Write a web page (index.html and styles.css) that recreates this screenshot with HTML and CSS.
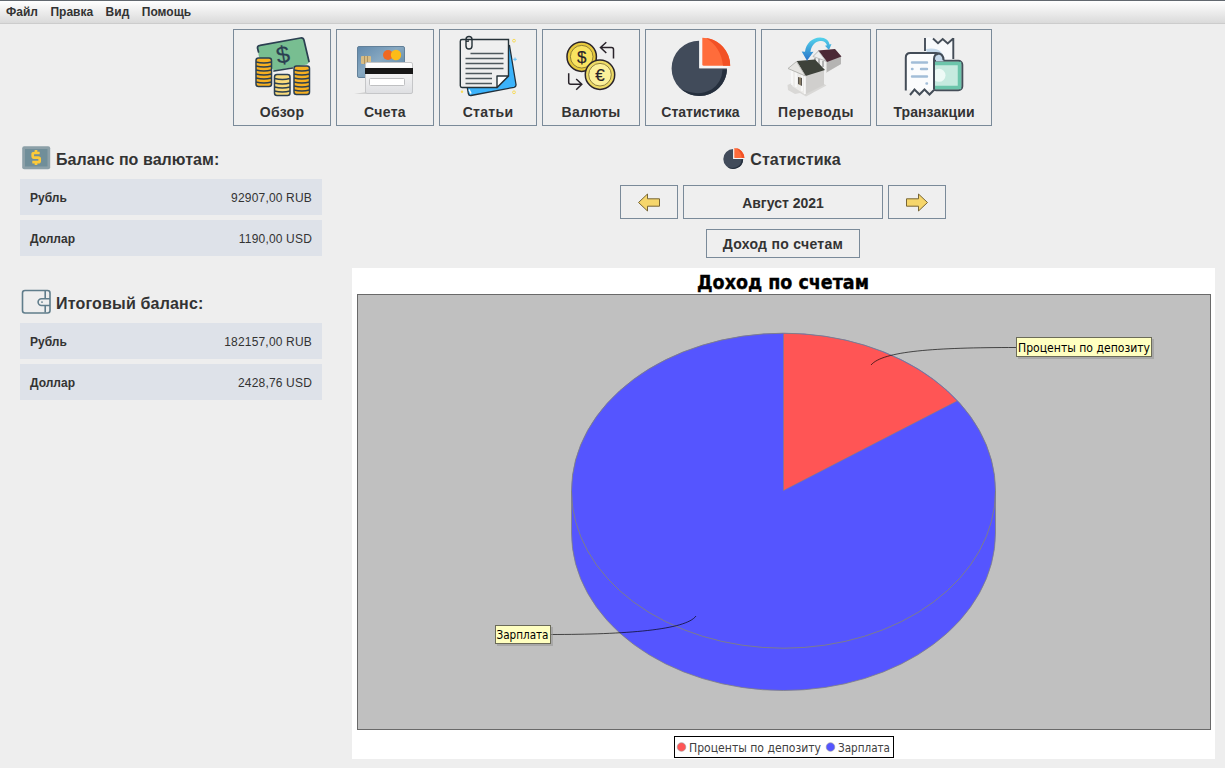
FILE: index.html
```html
<!DOCTYPE html>
<html lang="ru">
<head>
<meta charset="utf-8">
<title>Статистика</title>
<link rel="stylesheet" href="styles.css">
</head>
<body>
<nav class="menubar"><span>Файл</span><span>Правка</span><span>Вид</span><span>Помощь</span></nav>

<header class="toolbar">
  <button class="tool w98">
    <svg viewBox="0 0 64 64">
      <path d="M9 22 7.3 12.5 10 10.3 51 2.9 54 5 59.3 27 57 29.5 24.5 35.8z" fill="#78be91"/>
      <path d="M8.500 17 7.500 13Q7.300 10.700 10 10.300L50.500 3Q53.400 2.500 54 5.200L59 26.500M24 36l18.500-3" fill="none" stroke="#2b3f51" stroke-width="1.700" stroke-linecap="round"/>
      <text x="33" y="28" class="glyph dollar-big" transform="rotate(-10 33 20)">$</text>
      <g stroke="#2b3f51" stroke-width="1.500">
        <rect x="6" y="23" width="15.500" height="28.500" rx="2.500" fill="#f7b021"/>
        <path d="M6 27q8 2 15.500 0M6 31q8 2 15.500 0M6 35q8 2 15.500 0M6 39q8 2 15.500 0M6 43q8 2 15.500 0M6 47q8 2 15.500 0" fill="none"/>
        <rect x="24.500" y="39.500" width="15.500" height="21" rx="2.500" fill="#f8da7b"/>
        <path d="M24.500 43.500q8 2 15.500 0M24.500 48q8 2 15.500 0M24.500 52q8 2 15.500 0M24.500 56q8 2 15.500 0" fill="none"/>
        <rect x="44" y="31" width="15.500" height="28.500" rx="2.500" fill="#f7b021"/>
        <path d="M44 35q8 2 15.500 0M44 39q8 2 15.500 0M44 43q8 2 15.500 0M44 47q8 2 15.500 0M44 51q8 2 15.500 0M44 55q8 2 15.500 0" fill="none"/>
      </g>
    </svg>
    <span>Обзор</span>
  </button>
  <button class="tool w98">
    <svg viewBox="0 0 64 64">
      <defs>
        <linearGradient id="card" x2="1" y2="1"><stop offset="0" stop-color="#6189ac"/><stop offset=".45" stop-color="#88a9c2"/><stop offset="1" stop-color="#527f9e"/></linearGradient>
        <linearGradient id="paper" x2="0" y2="1"><stop offset="0" stop-color="#fff"/><stop offset="1" stop-color="#dedfe2"/></linearGradient>
      </defs>
      <path d="M1 59h12v-2z" fill="#d2d2d2"/>
      <rect x="4.500" y="11.500" width="47" height="31" rx="1.500" fill="url(#card)" stroke="#628099"/>
      <rect x="8" y="21" width="10" height="8" rx="1" fill="#d8bd85"/><path d="M11.500 21v8M14.500 21v8" stroke="#9b8052" stroke-width=".7"/>
      <circle cx="35" cy="20" r="5" fill="#ef6924"/><circle cx="43" cy="20" r="5.200" fill="#fdbc18"/>
      <rect x="12.500" y="27.500" width="47" height="31" rx="1.500" fill="url(#paper)" stroke="#c5c6c8"/>
      <path d="M12 33h48v6H12z" fill="#171717"/>
      <rect x="16.500" y="43.500" width="35" height="7" rx="1" fill="#fff" stroke="#bfc0c2"/>
    </svg>
    <span>Счета</span>
  </button>
  <button class="tool w98">
    <svg viewBox="0 0 64 64">
      <path d="M51 11 53.500 10.500 60 49.500Q60.300 51.800 58 52.300L15 60.500Q12.800 60.800 12.300 58.500L11 51z" fill="#3bb3fb" stroke="#20303c" stroke-width="1.300"/>
      <path d="M13 54.500l2 4" stroke="#fff" stroke-width="1.500"/>
      <path d="M6 4.500h46.500V41L41 52.500H6q-1.700 0-1.700-1.700V6.200Q4.300 4.500 6 4.500z" fill="#efefef" stroke="#263238" stroke-width="1.400"/>
      <path d="M41 52.500V41h11.500z" fill="#fff" stroke="#263238" stroke-width="1.400" stroke-linejoin="round"/>
      <path d="M14.500 18.500h33M9.500 23.500h38M9.500 28.500h38M9.500 33.500h38M9.500 38.500h26.500M9.500 43.500h26.500M9.500 48.500h26.500" stroke="#4e585d" stroke-width="1.600"/>
      <path d="M10 7V4.500a3 3 0 0 1 6 0V11a3 3 0 0 1-6 0V7q0-1 3-1" fill="none" stroke="#263238" stroke-width="1.400"/>
      <g fill="none" stroke="#f7dc5b"><circle cx="58" cy="5.700" r="1.400"/><circle cx="58" cy="57.300" r="1.400"/></g>
      <circle cx="6" cy="56.700" r="1.200" fill="#f7dc5b"/>
      <path d="M59 22.500v3.600M57.200 24.300h3.600" stroke="#66c4fc"/>
    </svg>
    <span>Статьи</span>
  </button>
  <button class="tool w98">
    <svg viewBox="0 0 64 64">
      <circle cx="22.700" cy="21.700" r="14.700" fill="#e7c93d" stroke="#29232a" stroke-width="1.500"/>
      <circle cx="22.700" cy="21.700" r="11.300" fill="#f9e360" stroke="#77682e" stroke-width=".8"/>
      <circle cx="41" cy="39.700" r="14.700" fill="#eedb66" stroke="#29232a" stroke-width="1.500"/>
      <circle cx="41" cy="39.700" r="11.300" fill="#fcf09a" stroke="#77682e" stroke-width=".8"/>
      <text x="22.700" y="27.500" class="glyph coin">$</text>
      <text x="41" y="45.500" class="glyph coin">€</text>
      <path d="M54.500 23.500V14.500q0-2-2-2H42M47.300 7.300 41.500 12.500l5.800 5.500M9.700 38.300v9q0 2 2 2H22.500M17.200 44l5.600 5.300-5.600 5.400" fill="none" stroke="#29232a" stroke-width="1.500"/>
    </svg>
    <span>Валюты</span>
  </button>
  <button class="tool w111">
    <svg viewBox="0 0 64 64">
      <g id="piemark">
        <path d="M31.300 5.700A27.700 27.700 0 1 0 59 33.300H31.300z" fill="#414b5a"/>
        <path d="M54.500 34.500H59A27.700 27.700 0 0 1 13 54Q30 62 43.500 54.500Q54 47.500 54.500 34.500z" fill="#252f3d"/>
        <path d="M31.300 5.700v27.600H59l2-2-27.700-28z" fill="#f6f6f6"/>
        <path d="M34.300 2.700A27.900 27.900 0 0 1 62.200 30.700H35.800q-1.500 0-1.500-1.500z" fill="#ff6c3b"/>
        <path d="M38 3A27.900 27.900 0 0 1 62.200 30.700H55Q53 12 38 3z" fill="#f25125"/>
      </g>
    </svg>
    <span>Статистика</span>
  </button>
  <button class="tool w110">
    <svg viewBox="0 0 64 64">
      <defs><linearGradient id="arc" x2="0" y2="1"><stop offset="0" stop-color="#54d4ec"/><stop offset="1" stop-color="#2872c8"/></linearGradient></defs>
      <path d="M29 21l13 6v11l15-9v-8l-6-6-17 1z" fill="#d5d4d2"/>
      <path d="M43 26l14-5v8l-14 8z" fill="#b5b4b3"/>
      <path d="M34 15.500 51 14l6.500 7.500L43 27z" fill="#4b2936"/>
      <path d="M29 21.500 34.500 16l7.500 10z" fill="#eee" stroke="#aaa" stroke-width=".7"/>
      <path d="M31 23v5M35 24v7M39 26v6" stroke="#777"/>
      <path d="M3.500 50l4.500-2 13 11 19-10 2.500 1.500L22 61.500 16 58l-5 1-7-4z" fill="#d9d8d6"/>
      <path d="M8 34l13 6v19.500L8 51z" fill="#edecea"/>
      <path d="M21 40l19-6v16l-19 9.500z" fill="#d0cfcd"/>
      <path d="M8 35v15M12 37v15M18 39v17M21 40v19" stroke="#fafafa" stroke-width="1.500"/>
      <path d="M14 42l4 1v8l-4-2z" fill="#57534c"/><path d="M16 42v8" stroke="#d0bd91" stroke-width=".8"/>
      <path d="M12.700 26 31 24.500 41 35 21.500 41z" fill="#3e423a"/>
      <path d="M4 33.500 12.500 26.500 21.500 41z" fill="#e6e5e2" stroke="#aaa9a6" stroke-width=".8"/>
      <path d="M17.700 16.500l3.300.300C22 8.500 28 2.700 36 2.500c5.500 0 9 3 9.500 7l2-.500-2.500 6-4-4.300 2-.500C41.500 6.500 39 5.500 36 6c-6 .800-9 6-9.500 11l3-.3-6.500 9z" fill="url(#arc)"/>
    </svg>
    <span>Переводы</span>
  </button>
  <button class="tool w116">
    <svg viewBox="0 0 64 64">
      <path d="M23 3.500 26 2l5 1 5 5 4.500-4 5 4.500 5-4.500V26H23z" fill="#f7f9fb"/>
      <path d="M24 14q17-3 19 12H33l-8-8z" fill="#c4d8ea"/>
      <path d="M23 3v13M31 3.500l5 4.800L40.700 4l5 4.500 5.500-5M51.300 3v21" fill="none" stroke="#444d58" stroke-width="1.900"/>
      <rect x="30" y="25.700" width="30.300" height="29.500" rx="4" fill="#c6eadf" stroke="#444d58" stroke-width="2"/>
      <path d="M32 28.500h25.500v24H32" fill="none" stroke="#6cc5ab" stroke-width="3.500"/>
      <circle cx="37" cy="40.300" r="6.500" fill="#eefaf6"/>
      <path d="M34 19q7.500 0 7.500 7.200H34z" fill="#c4d8ea"/>
      <path d="M4 55V22q0-4 4-4h24v39l-4.500-3-5 6-5-5.500-4.500 5-4.500-5z" fill="#fbfcfd"/>
      <path d="M3.800 55.500V22.500q0-4.500 4.500-4.500H34q7.500 0 7.500 7.200M32 54V24q0-5 4.500-5M8 60l4.500-5.500 5 5 5-5 5 5 5-5" fill="none" stroke="#444d58" stroke-width="2"/>
      <path d="M10 27.500h15M10 34h.5M19 34h6M10 41.500h15M24.500 48.500H25" stroke="#a2bdd7" stroke-width="2.400" stroke-linecap="round"/>
    </svg>
    <span>Транзакции</span>
  </button>
</header>

<main class="content">
  <aside class="balances">
    <section class="group">
      <h2>
        <svg class="head-icon bill" viewBox="0 0 30 26"><rect x="1.200" y="1.200" width="28" height="23" rx="2" fill="#8ca0a8"/><rect x="4" y="4" width="22.500" height="17.500" fill="#708e99"/><path d="M18.700 8H13.500Q11.700 8 11.700 9V11Q11.700 12.600 13 12.600H17.300Q18.700 12.600 18.700 14V15.700Q18.700 17.200 17.200 17.200H11.300M15 5V8M15 17v3" fill="none" stroke="#fdca38" stroke-width="2.700"/></svg>
        <span>Баланс по валютам:</span>
      </h2>
      <div class="row"><b>Рубль</b><span>92907,00 RUB</span></div>
      <div class="row"><b>Доллар</b><span>1190,00 USD</span></div>
    </section>
    <section class="group">
      <h2>
        <svg class="head-icon wallet" viewBox="0 0 30 26"><g fill="none" stroke="#607d8b" stroke-width="1.600"><rect x="1.500" y="1.500" width="27.500" height="22.500" rx="2.500"/><path d="M24.200 2v8M24.200 16.500v7M29 9.700H20.500a3.400 3.400 0 0 0 0 6.800H29"/></g><circle cx="21" cy="13.100" r=".9" fill="#607d8b"/></svg>
        <span class="total">Итоговый баланс:</span>
      </h2>
      <div class="row"><b>Рубль</b><span>182157,00 RUB</span></div>
      <div class="row"><b>Доллар</b><span>2428,76 USD</span></div>
    </section>
  </aside>

  <section class="stats">
    <h2 class="stats-title"><svg class="mini-pie" viewBox="0 0 64 64"><use href="#piemark"/></svg><span>Статистика</span></h2>
    <div class="period">
      <button class="arrow"><svg viewBox="0 0 24 18"><path d="M1.500 9.500 10.500 1v4.800h12v7.400h-12V18z" fill="#f6d66b" stroke="#776536" stroke-width="1"/></svg></button>
      <button class="month">Август 2021</button>
      <button class="arrow"><svg class="flip" viewBox="0 0 24 18"><path d="M1.500 9.500 10.500 1v4.800h12v7.400h-12V18z" fill="#f6d66b" stroke="#776536" stroke-width="1"/></svg></button>
    </div>
    <button class="mode">Доход по счетам</button>
    <svg class="chart" viewBox="352 268 863 491">
      <rect x="352" y="268" width="863" height="491" fill="#fff"/>
      <text x="697" y="289" class="chart-title" textLength="172" lengthAdjust="spacingAndGlyphs">Доход по счетам</text>
      <rect x="357.500" y="294.500" width="853" height="435" fill="#c0c0c0" stroke="#696969"/>
      <path d="M571.500 490.500A212 157.500 0 0 1 995.500 490.500V533A212 157.500 0 0 1 571.500 533z" fill="#55f"/>
      <path d="M571.500 490.500V533A212 157.500 0 0 0 995.500 533V490.500" fill="none" stroke="#808080" stroke-width=".8"/>
      <path d="M783.500 490.500V333.500A212 157.500 0 0 1 957 401z" fill="#f55"/>
      <ellipse cx="783.500" cy="490.700" rx="212" ry="157.500" fill="none" stroke="#808080" stroke-width=".9"/>
      <path d="M783.500 333.500V490.500L957 401" fill="none" stroke="#808080" stroke-opacity=".6"/>
      <path d="M871 365C883 351 935 347.500 1016 347.500M551 634.500C625 634.500 686 630 696 616" fill="none" stroke="#000" stroke-opacity=".65"/>
      <g fill="#979797" fill-opacity=".6"><rect x="1018" y="339" width="136" height="20"/><rect x="497" y="627" width="56" height="19"/></g>
      <g fill="#ffffc0" stroke="#6b6b58"><rect x="1016.500" y="337.500" width="135" height="19"/><rect x="495.500" y="625.500" width="55" height="18"/></g>
      <text x="1018" y="352" class="label" textLength="132" lengthAdjust="spacingAndGlyphs">Проценты по депозиту</text>
      <text x="496.500" y="639" class="label" textLength="52" lengthAdjust="spacingAndGlyphs">Зарплата</text>
      <rect x="674.500" y="736.500" width="219" height="21" fill="#fff" stroke="#000"/>
      <circle cx="681.500" cy="747" r="4.300" fill="#f55" stroke="#999" stroke-width=".6"/>
      <circle cx="830.500" cy="747" r="4.300" fill="#55f" stroke="#999" stroke-width=".6"/>
      <text x="689" y="752" class="label legend" textLength="132" lengthAdjust="spacingAndGlyphs">Проценты по депозиту</text>
      <text x="838" y="752" class="label legend" textLength="52" lengthAdjust="spacingAndGlyphs">Зарплата</text>
    </svg>
  </section>
</main>
</body>
</html>
```
FILE: styles.css
```css
* { box-sizing: border-box; }
body { margin: 0; width: 1225px; height: 768px; overflow: hidden; background: #eee; color: #333; font-family: "Liberation Sans", Arial, sans-serif; }
button { font: inherit; color: inherit; background: #efefef; border: 1px solid #7a8a99; border-radius: 0; padding: 0; margin: 0; }
svg { display: block; flex: none; }

.menubar { height: 24px; display: flex; gap: 12.5px; padding-left: 6px; border-top: 1px solid #62686f; border-bottom: 1px solid #ccc; background: linear-gradient(#fff, #dadada); font-size: 12px; font-weight: bold; line-height: 22px; }

.toolbar { display: flex; justify-content: center; gap: 5px; margin-top: 5px; height: 97px; }
.tool { display: flex; flex-direction: column; align-items: center; padding-top: 5px; font-size: 14px; font-weight: bold; line-height: 17px; letter-spacing: .1px; }
.tool svg { width: 64px; height: 64px; margin: 0 1px 5px 0; letter-spacing: 0; }
.w98 { width: 98px; }
.w98 span { letter-spacing: .3px; }
.w110 { width: 110px; }
.w110 span { letter-spacing: .5px; }
.w111 { width: 111px; }
.w111 span { letter-spacing: 0; }
.w116 { width: 116px; }
.glyph { font-family: "Liberation Sans", Arial, sans-serif; font-weight: normal; text-anchor: middle; fill: #29232a; stroke: #29232a; stroke-width: .2px; }
.dollar-big { font-size: 24px; fill: #2b3f51; stroke: #2b3f51; }
.coin { font-size: 17px; }

.content { display: flex; gap: 30px; padding: 19px 10px 0 20px; }
.balances { width: 302px; display: flex; flex-direction: column; gap: 33px; }
h2 { margin: 0; display: flex; align-items: center; font-size: 16px; line-height: 28px; height: 28px; }
.balances h2 { gap: 5px; padding-left: 1px; height: 29px; }
.balances h2 span { letter-spacing: .06px; }
.balances h2 .total { letter-spacing: .18px; }
.head-icon { width: 30px; height: 26px; }
.bill { margin-bottom: 3px; }
.wallet { margin-bottom: 3px; }
.group { display: flex; flex-direction: column; gap: 5px; }
.row { display: flex; justify-content: space-between; align-items: center; height: 36px; padding: 2px 10px 0; background: #dee2e9; font-size: 12px; }
.row span { letter-spacing: .18px; }

.stats { width: 863px; display: flex; flex-direction: column; align-items: center; }
.stats-title { gap: 5px; margin: 1px 4px 11px 0; letter-spacing: .1px; }
.mini-pie { width: 23px; height: 23px; margin-bottom: 3px; }
.period { display: flex; gap: 5px; height: 34px; margin-right: 1px; font-size: 14px; font-weight: bold; }
.arrow { width: 58px; display: flex; align-items: center; justify-content: center; }
.arrow svg { width: 24px; height: 18px; overflow: visible; }
.flip { transform: scaleX(-1); }
.month { width: 200px; padding-top: 2px; }
.mode { width: 154px; height: 29px; margin: 10px 1px 10px 0; font-size: 14px; font-weight: bold; letter-spacing: .3px; }
.chart { width: 863px; height: 491px; }
.chart-title { font: bold 20px "DejaVu Sans Condensed", "DejaVu Sans", sans-serif; fill: #000; stroke: #000; stroke-width: .35px; }
.label { font: 12px "DejaVu Sans Condensed", "DejaVu Sans", sans-serif; fill: #000; }
.legend { fill: #404040; }
```
